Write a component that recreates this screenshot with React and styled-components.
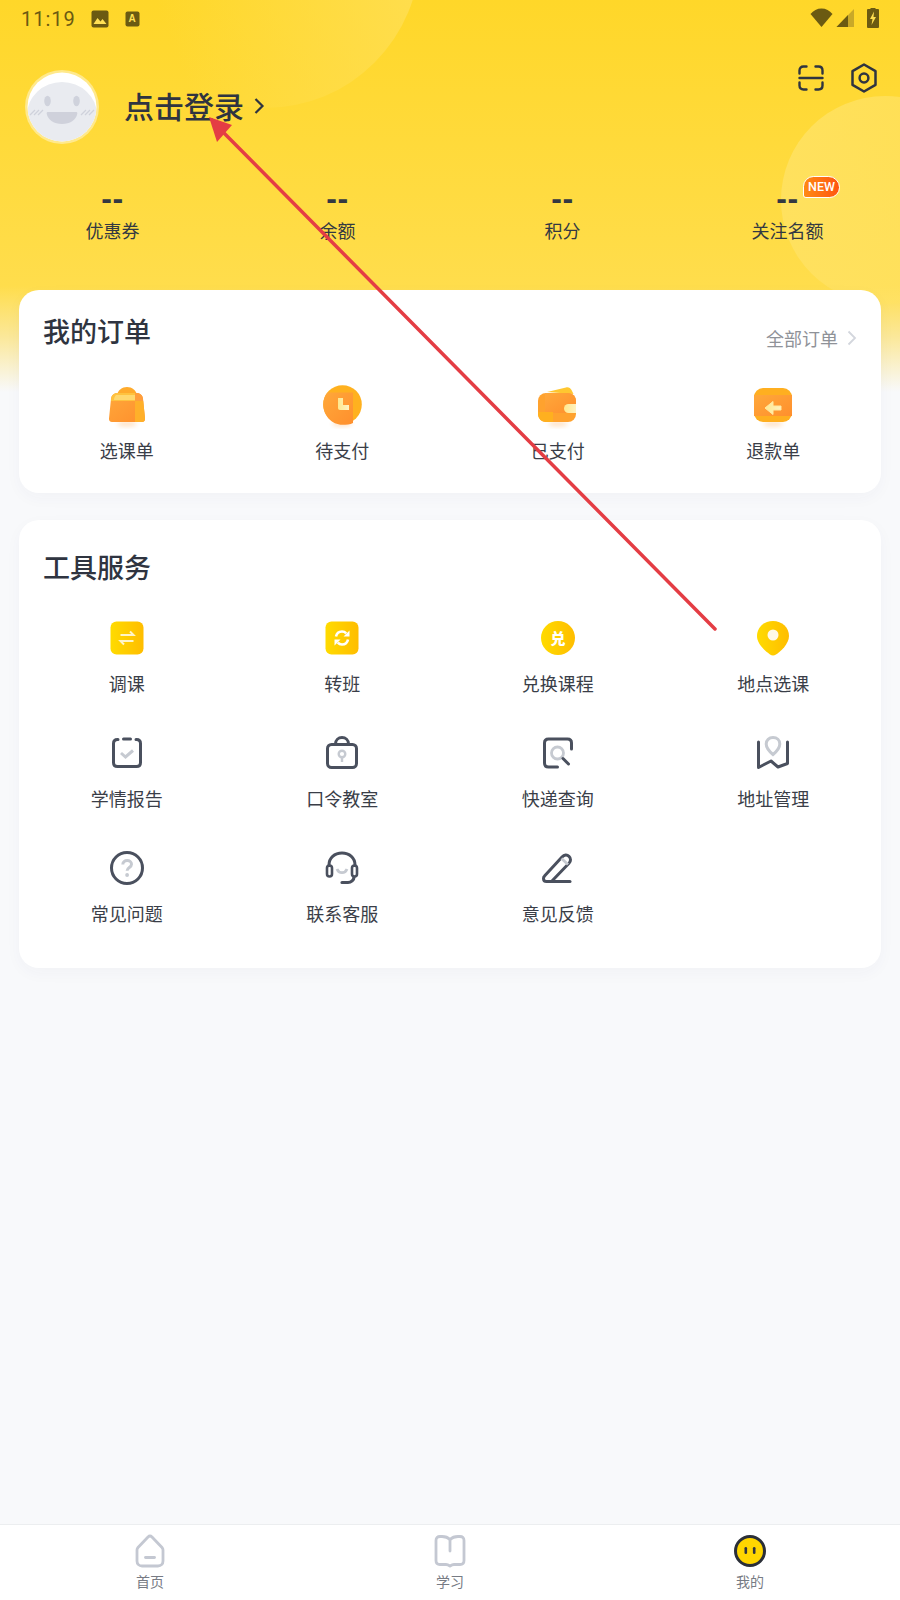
import React from "react";
import styled, { createGlobalStyle } from "styled-components";

const Global = createGlobalStyle`
  html, body { margin: 0; padding: 0; background: #f8f9fb; }
  body { font-family: "Noto Sans CJK SC", "Noto Sans", sans-serif; }
`;

const Page = styled.div`
  position: relative;
  width: 900px;
  height: 1600px;
  overflow: hidden;
  display: flex;
  flex-direction: column;
  background: #f8f9fb;
  color: #333842;
`;

const Backdrop = styled.div`
  position: absolute;
  inset: 0 0 auto 0;
  height: 392px;
  overflow: hidden;
  background: linear-gradient(180deg, #ffd729 0%, #ffdd4c 73%, #fbe89a 86%, #f8f9fb 100%);
`;

const Bubble = styled.div`
  position: absolute;
  left: ${(p) => p.$x - p.$r}px;
  top: ${(p) => p.$y - p.$r}px;
  width: ${(p) => p.$r * 2}px;
  height: ${(p) => p.$r * 2}px;
  border-radius: 50%;
  background: ${(p) => p.$fill};
`;

const Content = styled.div`
  position: relative;
  display: flex;
  flex-direction: column;
  flex: 1;
`;

const StatusBar = styled.div`
  height: 38px;
  display: flex;
  align-items: center;
  padding: 0 22px 0 21px;
  color: #6b5a12;
`;

const Clock = styled.span`
  font-family: Roboto, sans-serif;
  font-size: 20px;
  letter-spacing: 1px;
  line-height: 38px;
  margin-right: 15px;
`;

const StatusLeft = styled.div`
  display: flex;
  align-items: center;
  gap: 16px;
  flex: 1;
`;

const StatusRight = styled.div`
  display: flex;
  align-items: center;
  gap: 3px;
  margin-top: -3px;
`;

const ProfileRow = styled.div`
  margin-top: 25px;
  padding: 0 22px 0 24px;
  display: flex;
  justify-content: space-between;
  align-items: flex-start;
`;

const ProfileLeft = styled.div`
  display: flex;
  align-items: center;
  margin-top: 6px;
`;

const Login = styled.div`
  margin: -5px 0 0 24px;
  font-size: 30px;
  line-height: 44px;
  font-weight: 500;
  color: #2f3440;
`;

const LoginChevron = styled.svg`
  margin: -2px 0 0 9px;
`;

const TopActions = styled.div`
  display: flex;
  align-items: center;
  gap: 26px;
`;

const Stats = styled.div`
  margin-top: 38px;
  display: grid;
  grid-template-columns: repeat(4, 225px);
`;

const Stat = styled.div`
  position: relative;
  display: flex;
  flex-direction: column;
  align-items: center;
`;

const StatValue = styled.div`
  font-family: "Liberation Sans", sans-serif;
  font-weight: 700;
  font-size: 32px;
  letter-spacing: 0.6px;
  line-height: 30px;
  color: #333842;
`;

const StatLabel = styled.div`
  font-size: 18px;
  line-height: 26px;
  margin-top: 4px;
  color: #333842;
`;

const NewBadge = styled.span`
  position: absolute;
  left: 128px;
  top: -7px;
  width: 37px;
  height: 22px;
  box-sizing: border-box;
  border: 1.5px solid #fff;
  border-radius: 11px 12px 11px 3px;
  background: linear-gradient(90deg, #ff8a14, #ff5510);
  color: #fff;
  font-family: Roboto, sans-serif;
  font-size: 12.5px;
  line-height: 19px;
  text-align: center;
  font-weight: 500;
`;

const Card = styled.section`
  margin: ${(p) => p.$top}px 19px 0;
  padding: ${(p) => p.$padTop}px 0 ${(p) => p.$padBottom}px;
  background: #fff;
  border-radius: 20px;
  box-shadow: 0 5px 16px rgba(60, 70, 100, 0.035);
`;

const CardHead = styled.div`
  display: flex;
  justify-content: space-between;
  align-items: flex-end;
  padding: 0 24px;
  height: 40px;
`;

const CardTitle = styled.h2`
  margin: 0;
  font-size: 27px;
  line-height: 40px;
  font-weight: 500;
  color: #2f3440;
`;

const MoreLink = styled.div`
  display: flex;
  align-items: center;
  gap: 9px;
  font-size: 18px;
  line-height: 26px;
  color: #8f9298;
  margin-bottom: 0;
`;

const Grid = styled.div`
  margin-top: ${(p) => p.$top}px;
  display: grid;
  grid-template-columns: repeat(4, 1fr);
  row-gap: 33px;
`;

const Item = styled.div`
  display: flex;
  flex-direction: column;
  align-items: center;
`;

const ItemIcon = styled.svg`
  display: block;
  width: 48px;
  height: 48px;
`;

const ItemLabel = styled.div`
  margin-top: 8px;
  font-size: 18px;
  line-height: 26px;
  color: #3a3e48;
`;

const BottomNav = styled.nav`
  margin-top: auto;
  height: 76px;
  box-sizing: border-box;
  border-top: 1px solid #eceef0;
  background: #fff;
  display: grid;
  grid-template-columns: repeat(3, 300px);
`;

const NavItem = styled.div`
  display: flex;
  flex-direction: column;
  align-items: center;
  padding-top: 9px;
`;

const NavLabel = styled.div`
  font-size: 14px;
  line-height: 20px;
  margin-top: 3px;
  color: #777b84;
`;

const ArrowLayer = styled.svg`
  position: absolute;
  left: 0;
  top: 0;
  pointer-events: none;
`;

const D = "#4a505e";
const G = "#c6cad1";

function Defs() {
  return (
    <svg width="0" height="0" style={{ position: "absolute" }}>
      <defs>
        <linearGradient id="yel" x1="0" y1="0" x2="1" y2="0">
          <stop offset="0" stopColor="#ffdb00" />
          <stop offset="1" stopColor="#ffbd00" />
        </linearGradient>
        <linearGradient id="org" x1="0" y1="0" x2="1" y2="1">
          <stop offset="0" stopColor="#ffa83a" />
          <stop offset="1" stopColor="#ff8f2d" />
        </linearGradient>
        <linearGradient id="cream" x1="0" y1="0" x2="1" y2="0">
          <stop offset="0" stopColor="#ffe88f" />
          <stop offset="1" stopColor="#fff2c0" />
        </linearGradient>
        <filter id="soft" x="-50%" y="-100%" width="200%" height="300%">
          <feGaussianBlur stdDeviation="2.2" />
        </filter>
      </defs>
    </svg>
  );
}

const Glow = () => <ellipse cx="24" cy="43" rx="10" ry="2.500" fill="#ff9c3a" opacity=".3" filter="url(#soft)" />;

const orderIcons = {
  bag: (
    <>
      <Glow />
      <path d="M14 14C15 9 19 6 24 6s9 3 10 8z" fill="#ffab2c" />
      <path d="M9 41c-2 0-3.200-1.500-3-3.500L8 18c.3-3.500 2.800-6 6.300-6h19.400c3.500 0 6 2.500 6.300 6l2 19.500c.2 2-1 3.500-3 3.500z" fill="url(#org)" />
      <path d="M32 20h8.300L42 37.500c.2 2-1 3.500-3 3.500h-7z" fill="#ffb02a" />
      <path d="M32 12h1.700c3.500 0 6 2.500 6.300 6l.1 2H32z" fill="#ff9e3c" />
      <path d="M8 20l.1-2c.3-3.500 2.800-6 6.200-6H32v8z" fill="#ffc23e" />
      <path d="M13 14h19v5H11c0-2 .8-4 2-5z" fill="#ffdc77" opacity=".85" />
    </>
  ),
  clock: (
    <>
      <Glow />
      <circle cx="24.500" cy="23.500" r="19.300" fill="#ffb11f" />
      <path d="M5.200 23.500c0-4.500 1.500-9 4.300-12H35v30.500c-3 1.500-6.500 1.800-10.500 1.800-10.700 0-19.300-9.600-19.300-20.300z" fill="url(#org)" />
      <path d="M20 17h5v7h6v5h-9c-1.200 0-2-.8-2-2z" fill="url(#cream)" />
    </>
  ),
  wallet: (
    <>
      <Glow />
      <path d="M13 11l19-4.600c2.500-.6 4.500.6 5.500 2.600l2 4z" fill="#ffc730" />
      <rect x="4" y="12" width="38" height="29" rx="8" fill="#ffa22e" />
      <path d="M11 12h23c4.400 0 8 3.600 8 8v12H11z" fill="url(#org)" />
      <path d="M4 31h15v10h-7c-4.400 0-8-3.600-8-8z" fill="#ffb01f" />
      <path d="M42 23h-7.500a4.500 4.500 0 0 0 0 9H42z" fill="url(#cream)" />
    </>
  ),
  refund: (
    <>
      <Glow />
      <rect x="5" y="7" width="38" height="34" rx="9" fill="#ffaf20" />
      <rect x="5" y="14" width="38" height="21" fill="url(#org)" />
      <path d="M16 27l8-6.500v4.500h8v4h-8v4.500z" fill="url(#cream)" stroke="#ffe9a0" strokeWidth="1" strokeLinejoin="round" />
    </>
  ),
};

const toolIcons = {
  swap: (
    <>
      <rect x="7.500" y="7.500" width="33" height="33" rx="6" fill="url(#yel)" />
      <path d="M17.500 21h13l-3.500-3.500M30.500 27h-13l3.500 3.500" fill="none" stroke="#fff4c8" strokeWidth="2" />
    </>
  ),
  refresh: (
    <>
      <rect x="7.500" y="7.500" width="33" height="33" rx="6" fill="url(#yel)" />
      <path d="M18 22.500c.6-3 3-5 6-5 1.700 0 3.200.7 4.200 1.800M30 25.500c-.6 3-3 5-6 5-1.700 0-3.200-.7-4.200-1.800" fill="none" stroke="#fff" strokeWidth="2.600" />
      <path d="M31.500 16.500v6H25.500zM16.500 31.500v-6H22.500z" fill="#fff" />
    </>
  ),
  coin: (
    <>
      <circle cx="24" cy="24" r="17" fill="url(#yel)" />
      <text x="24" y="29.500" textAnchor="middle" fontSize="15" fontWeight="900" fill="#fff" fontFamily="Noto Sans CJK SC, sans-serif">兑</text>
    </>
  ),
  pin: (
    <>
      <path d="M24 7c9 0 16 6.500 16 15 0 8-8.500 15.500-13 18.500-1.900 1.200-4.100 1.200-6 0C16.500 37.500 8 30 8 22 8 13.500 15 7 24 7z" fill="url(#yel)" />
      <circle cx="24" cy="21" r="5.500" fill="#fff9e6" />
    </>
  ),
  report: (
    <>
      <path d="M15 10.500h-.500c-2.500 0-4 1.500-4 4v19c0 2.500 1.500 4 4 4h19c2.500 0 4-1.500 4-4v-19c0-2.500-1.500-4-4-4H33" fill="none" stroke={D} strokeWidth="3" strokeLinecap="round" />
      <path d="M20.500 10h7" stroke={D} strokeWidth="3" strokeLinecap="round" />
      <path d="M18 24l4.500 4 7.500-6.500" fill="none" stroke={G} strokeWidth="3" />
    </>
  ),
  lock: (
    <>
      <rect x="9.500" y="15.500" width="29" height="23" rx="4" fill="none" stroke={D} strokeWidth="3" />
      <path d="M17.500 15c0-4 3-6.500 6.500-6.500s6.500 2.500 6.500 6.500" fill="none" stroke={D} strokeWidth="3" />
      <circle cx="24" cy="25" r="3.300" fill="none" stroke={G} strokeWidth="2.400" />
      <path d="M24 28.500V33" stroke={G} strokeWidth="2.400" />
    </>
  ),
  search: (
    <>
      <path d="M37.500 20v-6c0-2.500-1.500-4-4-4h-19c-2.500 0-4 1.500-4 4v20c0 2.500 1.500 4 4 4h9" fill="none" stroke={D} strokeWidth="3" strokeLinecap="round" />
      <circle cx="23.500" cy="24" r="6" fill="none" stroke={G} strokeWidth="2.800" />
      <path d="M29 29.500l5.500 5.500" stroke={D} strokeWidth="3" strokeLinecap="round" />
    </>
  ),
  map: (
    <>
      <path d="M9.500 13v25.500L22 32l7 6 9.500-3.500V13" fill="none" stroke={D} strokeWidth="3" strokeLinejoin="round" strokeLinecap="round" />
      <path d="M24 8.500c4 0 6.800 2.800 6.800 6.500 0 4-3.800 8-6.800 10.500-3-2.500-6.800-6.500-6.800-10.500 0-3.700 2.800-6.500 6.800-6.500z" fill="#fff" stroke={G} strokeWidth="3" />
    </>
  ),
  help: (
    <>
      <circle cx="24" cy="24" r="15.500" fill="none" stroke={D} strokeWidth="3" />
      <path d="M19.800 20.500c0-2.500 2-4 4.400-4s4.300 1.500 4.300 3.800c0 3.200-4.400 3.200-4.400 6.500" fill="none" stroke={G} strokeWidth="3" />
      <circle cx="24.100" cy="31" r="1.900" fill={G} />
    </>
  ),
  headset: (
    <>
      <path d="M11 23v-2c0-7 5.500-12 13-12s13 5 13 12v2" fill="none" stroke={D} strokeWidth="3" />
      <rect x="9" y="21.500" width="5" height="11" rx="2.500" fill="none" stroke={D} strokeWidth="2.600" />
      <rect x="34" y="21.500" width="5" height="11" rx="2.500" fill="none" stroke={D} strokeWidth="2.600" />
      <path d="M36 33c0 3-3 5.500-6 5.500h-6" fill="none" stroke={D} strokeWidth="3.200" strokeLinecap="round" />
      <path d="M19 25c1 2.500 3 3.700 5 3.700s4-1.200 5-3.700" fill="none" stroke={G} strokeWidth="2.800" />
    </>
  ),
  pencil: (
    <>
      <path d="M19 37.500h-6.500c-1.900 0-3-1.100-3-3 0-1 .3-1.700 1-2.400L28 13c2.200-2.300 5-2.500 7-.7s2 5 0 7L17.500 37.500" fill="none" stroke={D} strokeWidth="3" strokeLinejoin="round" />
      <path d="M17 37.500h19" stroke={D} strokeWidth="3" strokeLinecap="round" />
      <path d="M27.500 14.500l6.500 6" stroke={G} strokeWidth="2.800" />
    </>
  ),
};

const orders = [
  ["bag", "选课单"],
  ["clock", "待支付"],
  ["wallet", "已支付"],
  ["refund", "退款单"],
];

const tools = [
  ["swap", "调课"],
  ["refresh", "转班"],
  ["coin", "兑换课程"],
  ["pin", "地点选课"],
  ["report", "学情报告"],
  ["lock", "口令教室"],
  ["search", "快递查询"],
  ["map", "地址管理"],
  ["help", "常见问题"],
  ["headset", "联系客服"],
  ["pencil", "意见反馈"],
];

const stats = [
  ["优惠券"],
  ["余额"],
  ["积分"],
  ["关注名额", true],
];

function Avatar() {
  return (
    <svg width="76" height="76" viewBox="0 0 76 76">
      <defs>
        <clipPath id="avatarClip">
          <circle cx="38" cy="38" r="34.500" />
        </clipPath>
      </defs>
      <circle cx="38" cy="38" r="37" fill="#ffe98c" />
      <circle cx="38" cy="38" r="34.500" fill="#fff" />
      <g clipPath="url(#avatarClip)">
        <ellipse cx="38" cy="46" rx="35" ry="33" fill="#e9ebf0" />
      </g>
      <ellipse cx="23.500" cy="32" rx="3.300" ry="5.200" fill="#cfd2dc" />
      <ellipse cx="52.500" cy="32" rx="3.300" ry="5.200" fill="#cfd2dc" />
      <path d="M24 43h28c1 0 1.500.7 1.300 1.700C52 51 46 55 38 55s-14-4-15.300-10.300C22.500 43.700 23 43 24 43z" fill="#cfd1db" />
      <path d="M6 46l5-5M10 46l5-5M14 46l5-5M57 46l5-5M61 46l5-5M65 46l5-5" stroke="#cfd2dc" strokeWidth="1.300" />
    </svg>
  );
}

export default function App() {
  return (
    <Page>
      <Global />
      <Defs />
      <Backdrop>
        <Bubble $x={265} $y={-47} $r={155} $fill="linear-gradient(70deg, rgba(255, 224, 90, 0) 20%, rgba(255, 223, 85, 0.85) 85%)" />
        <Bubble $x={885} $y={200} $r={104} $fill="linear-gradient(100deg, rgba(255, 226, 100, 0.85), rgba(255, 226, 100, 0.55))" />
      </Backdrop>
      <Content>
        <StatusBar>
          <Clock>11:19</Clock>
          <StatusLeft>
            <svg width="18" height="18" viewBox="0 0 18 18">
              <rect x="0.500" y="0.500" width="17" height="17" rx="2" fill="#6b5a12" />
              <path d="M2.500 14l4-6 3 3.500 2-2.500 4 5z" fill="#ffe055" />
            </svg>
            <svg width="15" height="16" viewBox="0 0 15 16">
              <rect x="0.500" y="0.500" width="14" height="15" rx="2" fill="#6b5a12" />
              <text x="7" y="10.500" textAnchor="middle" fontSize="10" fontWeight="700" fill="#ffe055" fontFamily="Liberation Sans, sans-serif">A</text>
            </svg>
          </StatusLeft>
          <StatusRight>
            <svg width="23" height="19" viewBox="0 0 23 19">
              <path d="M0.500 6C3.500 2.500 7 0.500 11.500 0.500S19.500 2.500 22.500 6L11.500 19z" fill="#6b5a12" />
            </svg>
            <svg width="19" height="19" viewBox="0 0 19 19">
              <path d="M18 1V19H0.500z" fill="#c9a928" />
              <path d="M12 7V19H0.500z" fill="#6b5a12" />
            </svg>
            <svg width="12" height="20" viewBox="0 0 12 20" style={{ marginLeft: 9, marginRight: -1 }}>
              <path d="M3.500 1V0h5v1H11a1 1 0 0 1 1 1v17a1 1 0 0 1-1 1H1a1 1 0 0 1-1-1V2a1 1 0 0 1 1-1z" fill="#6b5a12" />
              <path d="M7 3.500L3 11h2.500l-1 6 4.500-8H6.500z" fill="#ffdf50" />
            </svg>
          </StatusRight>
        </StatusBar>

        <ProfileRow>
          <ProfileLeft>
            <Avatar />
            <Login>点击登录</Login>
            <LoginChevron width="12" height="18" viewBox="0 0 12 18">
              <path d="M2.500 2l7 7-7 7" fill="none" stroke="#2f3440" strokeWidth="2.200" />
            </LoginChevron>
          </ProfileLeft>
          <TopActions>
            <svg width="26" height="26" viewBox="0 0 26 26" fill="none" stroke="#2f3440" strokeWidth="2.400" strokeLinecap="round">
              <path d="M1.500 8.500V5.500c0-2.500 1.500-4 4-4h3M17.500 1.500h3c2.500 0 4 1.500 4 4v3M24.500 17.500v3c0 2.500-1.500 4-4 4h-3M8.500 24.500h-3c-2.500 0-4-1.500-4-4v-3M1.500 13h23" />
            </svg>
            <svg width="28" height="30" viewBox="0 0 28 30" fill="none" stroke="#2f3440" strokeWidth="2.500">
              <path d="M14 1.500l11.500 6.700v13.600L14 28.500 2.500 21.800V8.200z" strokeLinejoin="round" />
              <circle cx="14" cy="15" r="4.400" />
            </svg>
          </TopActions>
        </ProfileRow>

        <Stats>
          {stats.map(([label, isNew]) => (
            <Stat key={label}>
              <StatValue>--</StatValue>
              <StatLabel>{label}</StatLabel>
              {isNew && <NewBadge>NEW</NewBadge>}
            </Stat>
          ))}
        </Stats>

        <Card $top={47} $padTop={21} $padBottom={30}>
          <CardHead>
            <CardTitle>我的订单</CardTitle>
            <MoreLink>
              全部订单
              <svg width="10" height="16" viewBox="0 0 10 16">
                <path d="M1.500 1.500L8 8l-6.500 6.500" fill="none" stroke="#d3d6dd" strokeWidth="1.800" />
              </svg>
            </MoreLink>
          </CardHead>
          <Grid $top={30}>
            {orders.map(([icon, label]) => (
              <Item key={label}>
                <ItemIcon viewBox="0 0 48 48">{orderIcons[icon]}</ItemIcon>
                <ItemLabel>{label}</ItemLabel>
              </Item>
            ))}
          </Grid>
        </Card>

        <Card $top={27} $padTop={27} $padBottom={42}>
          <CardHead>
            <CardTitle>工具服务</CardTitle>
          </CardHead>
          <Grid $top={27}>
            {tools.map(([icon, label]) => (
              <Item key={label}>
                <ItemIcon viewBox="0 0 48 48">{toolIcons[icon]}</ItemIcon>
                <ItemLabel>{label}</ItemLabel>
              </Item>
            ))}
          </Grid>
        </Card>

        <BottomNav>
          <NavItem>
            <svg width="34" height="34" viewBox="0 0 34 34" fill="none" stroke="#c4c8d2" strokeWidth="2.800">
              <path d="M5 13.500L15 3c1.200-1.200 2.800-1.200 4 0l10 10.500c.7.800 1 1.600 1 2.500v11c0 3-2 5-5 5H9c-3 0-5-2-5-5V16c0-.9.300-1.700 1-2.500z" strokeLinejoin="round" />
              <path d="M12.500 23.500h9" strokeLinecap="round" />
            </svg>
            <NavLabel>首页</NavLabel>
          </NavItem>
          <NavItem>
            <svg width="34" height="34" viewBox="0 0 34 34" fill="none" stroke="#c4c8d2" strokeWidth="2.800">
              <path d="M17 5.500C15 3.500 12 2.500 9 2.500H7C4.500 2.500 3 4 3 6.500v20c0 2.500 1.500 4 4 4h6c1.500 0 2.500.5 4 1.500 1.500-1 2.500-1.500 4-1.500h6c2.500 0 4-1.500 4-4v-20c0-2.500-1.500-4-4-4h-2c-3 0-6 1-8 3z" strokeLinejoin="round" />
              <path d="M17 5.500V17" strokeLinecap="round" />
            </svg>
            <NavLabel>学习</NavLabel>
          </NavItem>
          <NavItem>
            <svg width="34" height="34" viewBox="0 0 34 34">
              <circle cx="17" cy="17" r="14.500" fill="#ffd600" stroke="#2b2f38" strokeWidth="3" />
              <rect x="11.500" y="13" width="2.600" height="7" rx="1.300" fill="#2f3440" />
              <rect x="19.900" y="13" width="2.600" height="7" rx="1.300" fill="#2f3440" />
            </svg>
            <NavLabel>我的</NavLabel>
          </NavItem>
        </BottomNav>
      </Content>

      <ArrowLayer width="900" height="1600" viewBox="0 0 900 1600">
        <path d="M715 629L222 131" stroke="#e43d44" strokeWidth="3.500" strokeLinecap="round" />
        <path d="M209 117l8 25 15-17z" fill="#e43d44" />
      </ArrowLayer>
    </Page>
  );
}
